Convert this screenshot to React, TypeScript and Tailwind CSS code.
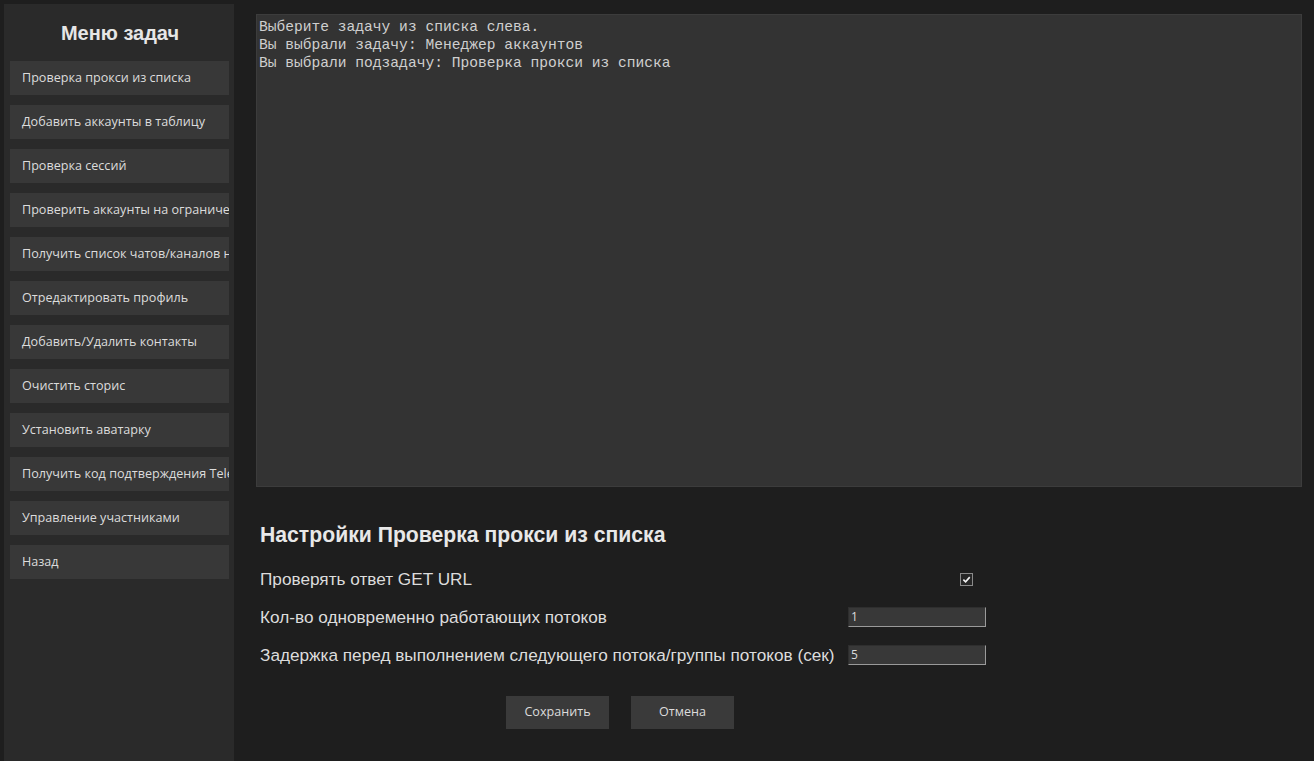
import { useState } from "react";

const tasks = [
  "Проверка прокси из списка",
  "Добавить аккаунты в таблицу",
  "Проверка сессий",
  "Проверить аккаунты на ограничения",
  "Получить список чатов/каналов на аккаунтах",
  "Отредактировать профиль",
  "Добавить/Удалить контакты",
  "Очистить сторис",
  "Установить аватарку",
  "Получить код подтверждения Telegram",
  "Управление участниками",
  "Назад",
];

const uiFont = { fontFamily: '"Open Sans", "Noto Sans", sans-serif' };

export default function App() {
  const [checkUrl, setCheckUrl] = useState(true);
  const [threads, setThreads] = useState("1");
  const [delay, setDelay] = useState("5");

  return (
    <div className="flex h-[761px] w-full overflow-hidden bg-[#1e1e1e]">
      {/* task menu */}
      <aside className="mt-1 ml-1 flex w-[230px] shrink-0 flex-col bg-[#2a2a2a]">
        <h1
          className="pt-[16px] pb-[15px] pl-[2px] text-center text-[20px] font-bold leading-[26px] text-[#e6e6e6]"
          style={{ fontFamily: '"Liberation Sans", Arial, sans-serif' }}
        >
          Меню задач
        </h1>
        <div className="flex flex-col gap-[10px] pl-[6px] pr-[5px]">
          {tasks.map((t) => (
            <button
              key={t}
              className="h-[34px] overflow-hidden whitespace-nowrap bg-[#383838] pl-[12px] text-left text-[12.6px] text-[#dcdcdc]"
              style={uiFont}
            >
              {t}
            </button>
          ))}
        </div>
      </aside>

      <main className="flex min-w-0 flex-1 flex-col pl-[22px] pr-[12px] pt-[14px]">
        {/* log output */}
        <div
          className="h-[473px] border border-[#3c3c3c] bg-[#333333] px-[2px] pt-[3px] text-[14.6px] leading-[18px] whitespace-pre text-[#cfcfcf]"
          style={{ fontFamily: '"Liberation Mono", "Courier New", monospace' }}
        >
          {"Выберите задачу из списка слева.\nВы выбрали задачу: Менеджер аккаунтов\nВы выбрали подзадачу: Проверка прокси из списка"}
        </div>

        {/* settings */}
        <div
          className="w-[730px]"
          style={{ fontFamily: '"Liberation Sans", Arial, sans-serif' }}
        >
          <h2 className="mt-[35px] pl-[4px] text-[21.2px] font-bold leading-[26px] text-[#e8e8e8]">
            Настройки Проверка прокси из списка
          </h2>
          <div className="mt-[21px] grid grid-cols-[592px_138px] items-center gap-y-[18px] pl-[4px] text-[17.2px] leading-[20px] text-[#dcdcdc]">
            <span>Проверять ответ GET URL</span>
            <div className="flex justify-end pr-[17px]">
              <button
                onClick={() => setCheckUrl(!checkUrl)}
                className="flex h-[13px] w-[13px] items-center justify-center border border-[#8a8a8a] bg-[#262626]"
              >
                {checkUrl && (
                  <svg viewBox="0 0 10 10" className="h-[9px] w-[9px]">
                    <path d="M1.5 5.2 L4 7.6 L8.6 2.4" fill="none" stroke="#f2f2f2" strokeWidth="1.8" />
                  </svg>
                )}
              </button>
            </div>
            <span>Кол-во одновременно работающих потоков</span>
            <input
              value={threads}
              onChange={(e) => setThreads(e.target.value)}
              className="-ml-[4px] h-[20px] w-[138px] border border-[#2e2e2e] border-r-[#9a9a9a] border-b-[#9a9a9a] bg-[#383838] px-[2px] text-[12px] text-[#dcdcdc] outline-none"
              style={uiFont}
            />
            <span>Задержка перед выполнением следующего потока/группы потоков (сек)</span>
            <input
              value={delay}
              onChange={(e) => setDelay(e.target.value)}
              className="-ml-[4px] h-[20px] w-[138px] border border-[#2e2e2e] border-r-[#9a9a9a] border-b-[#9a9a9a] bg-[#383838] px-[2px] text-[12px] text-[#dcdcdc] outline-none"
              style={uiFont}
            />
          </div>
          <div className="mt-[31px] flex justify-center gap-[22px] pr-[2px]" style={uiFont}>
            <button className="h-[33px] w-[103px] bg-[#3a3a3a] text-[12.6px] text-[#dcdcdc]">
              Сохранить
            </button>
            <button className="h-[33px] w-[103px] bg-[#3a3a3a] text-[12.6px] text-[#dcdcdc]">
              Отмена
            </button>
          </div>
        </div>
      </main>
    </div>
  );
}
